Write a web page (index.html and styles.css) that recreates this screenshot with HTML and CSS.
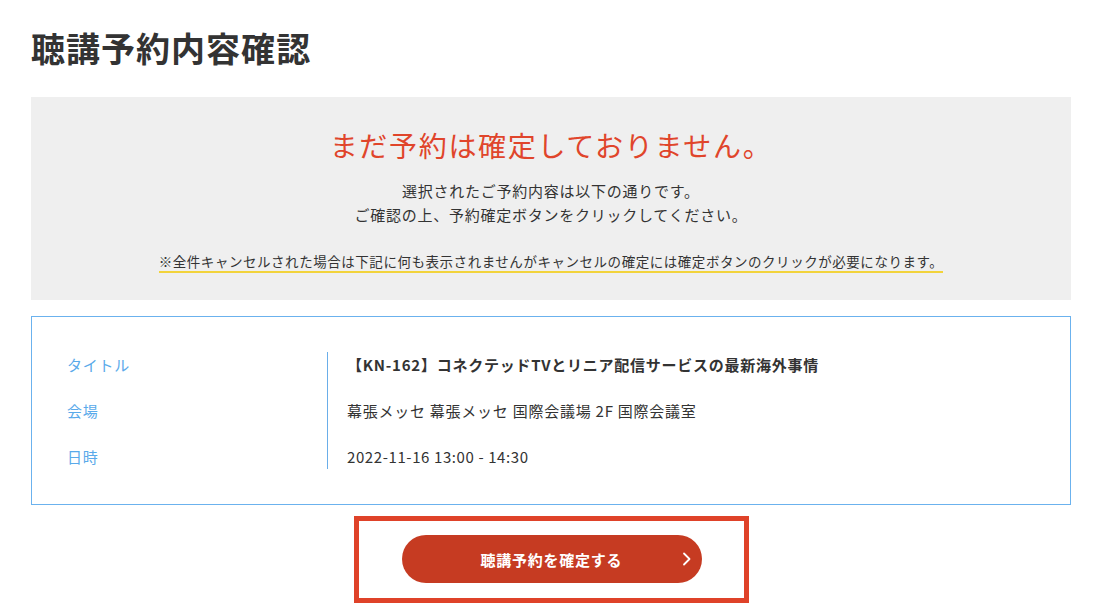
FILE: index.html
```html
<!DOCTYPE html>
<html lang="ja">
<head>
<meta charset="utf-8">
<title>聴講予約内容確認</title>
<link rel="stylesheet" href="styles.css">
</head>
<body>
<main class="page">
  <h1 class="page-title">聴講予約内容確認</h1>

  <section class="notice">
    <p class="notice-head">まだ予約は確定しておりません。</p>
    <p class="notice-body">選択されたご予約内容は以下の通りです。<br>ご確認の上、予約確定ボタンをクリックしてください。</p>
    <p class="notice-note"><span class="note-line">※全件キャンセルされた場合は下記に何も表示されませんがキャンセルの確定には確定ボタンのクリックが必要になります。</span></p>
  </section>

  <section class="detail">
    <dl class="detail-list">
      <div class="detail-labels">
        <dt>タイトル</dt>
        <dt>会場</dt>
        <dt>日時</dt>
      </div>
      <div class="detail-values">
        <dd class="strong">【KN-162】コネクテッドTVとリニア配信サービスの最新海外事情</dd>
        <dd>幕張メッセ 幕張メッセ 国際会議場 2F 国際会議室</dd>
        <dd class="date">2022-11-16 13:00 - 14:30</dd>
      </div>
    </dl>
  </section>

  <div class="action">
    <div class="action-frame">
      <button class="confirm-btn" type="button">
        <span class="btn-label">聴講予約を確定する</span>
        <svg class="btn-chevron" width="10" height="16" viewBox="0 0 10 16"><path d="M2 2.5 L7.5 8 L2 13.5" fill="none" stroke="#fff" stroke-width="1.8" stroke-linecap="round" stroke-linejoin="round"/></svg>
      </button>
    </div>
  </div>
</main>
</body>
</html>
```

FILE: styles.css
```css
* { box-sizing: border-box; }

html, body {
  margin: 0;
  padding: 0;
  background: #fff;
}

body {
  font-family: "Noto Sans CJK JP", "Noto Sans", sans-serif;
  color: #333;
}

.page {
  width: 1040px;
  margin: 0 auto;
  padding-top: 24px;
}

.page-title {
  margin: 0 0 25px;
  font-size: 34px;
  line-height: 48px;
  font-weight: 700;
  letter-spacing: 0.03em;
  color: #333;
}

.notice {
  background: #efefef;
  text-align: center;
  padding: 29px 20px 26px;
  height: 203px;
}

.notice p { margin: 0; }

.notice-head {
  font-size: 28px;
  line-height: 39px;
  letter-spacing: 0.06em;
  color: #e0452b;
  font-weight: 400;
}

.notice-body {
  margin-top: 14px !important;
  font-size: 15px;
  line-height: 24px;
  letter-spacing: 0.05em;
  color: #333;
}

.notice-note {
  margin-top: 25px !important;
  font-size: 13.5px;
  line-height: 18px;
}

.note-line {
  display: inline-block;
  letter-spacing: 0.04em;
  border-bottom: 2px solid #f2d33b;
  padding-bottom: 1px;
  color: #333;
}

.detail {
  margin-top: 16px;
  border: 1px solid #6bb2ee;
  padding: 35px 35px 35px;
}

.detail-list {
  display: flex;
  margin: 0;
}

.detail-labels {
  width: 260px;
  display: flex;
  flex-direction: column;
  gap: 21px;
}

.detail-values {
  flex: 1;
  border-left: 1px solid #6aaee9;
  padding-left: 19px;
  display: flex;
  flex-direction: column;
  gap: 21px;
}

.detail-labels dt,
.detail-values dd {
  margin: 0;
  font-size: 15px;
  line-height: 25px;
  letter-spacing: 0.05em;
}

.detail-labels dt { color: #5aaaea; }

.detail-values dd { color: #333; }

.detail-values dd.strong { font-weight: 700; }

.detail-values dd.date { letter-spacing: 0.04em; }

.action {
  display: flex;
  justify-content: center;
  margin-top: 11px;
  padding-left: 1px;
}

.action-frame {
  border: 5px solid #df4229;
  width: 395px;
  padding: 14px 0 15px;
  display: flex;
  justify-content: center;
}

.confirm-btn {
  position: relative;
  width: 300px;
  height: 48px;
  border: 0;
  border-radius: 24px;
  background: #c63b22;
  color: #fff;
  font-family: "Noto Sans CJK JP", "Noto Sans", sans-serif;
  font-size: 15px;
  font-weight: 700;
  letter-spacing: 0.05em;
  display: flex;
  align-items: center;
  justify-content: center;
  cursor: pointer;
}

.btn-chevron {
  position: absolute;
  right: 10px;
  top: 16px;
}
```
